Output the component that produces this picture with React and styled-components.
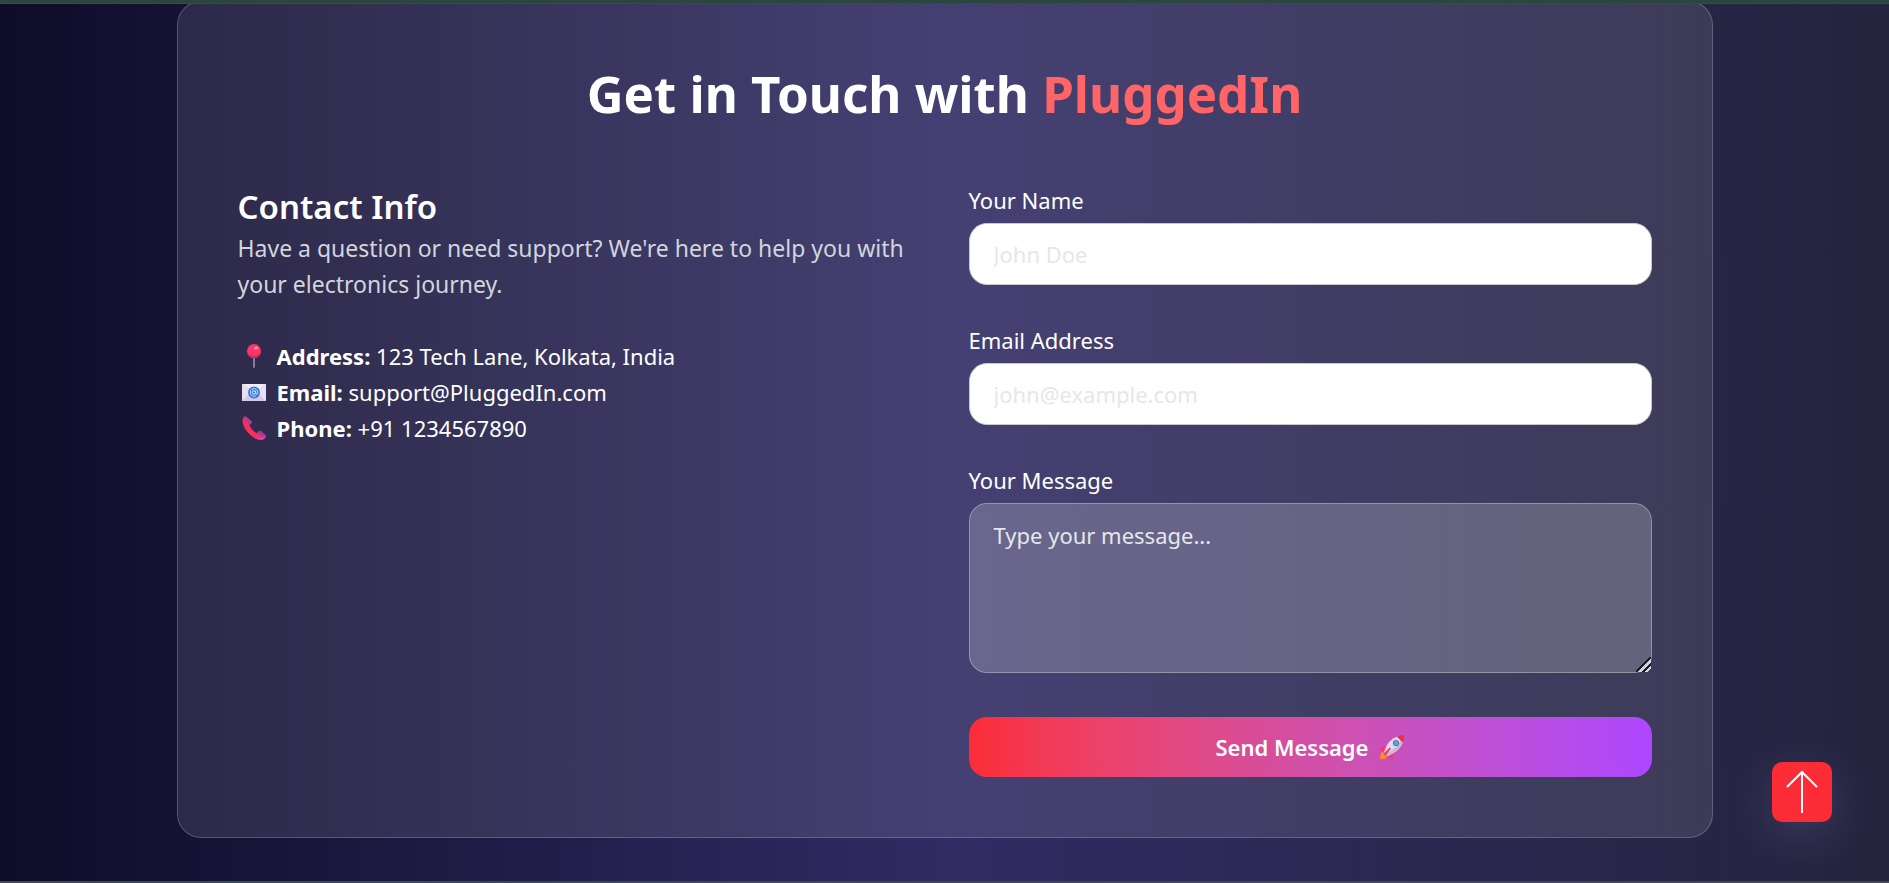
import React from 'react';
import styled, { createGlobalStyle } from 'styled-components';

const GlobalStyle = createGlobalStyle`
  *, *::before, *::after { box-sizing: border-box; }
  body { margin: 0; background: #0f0c29; }
  body, button, input, textarea { font-family: "Segoe UI", "Noto Sans", sans-serif; }
  h1, h2, p, ul { margin: 0; padding: 0; }
`;

const Page = styled.main`
  min-height: 100vh;
  display: flex;
  flex-direction: column;
  background: linear-gradient(to right, #0f0c29, #302b63, #24243e);
  color: #fff;
  font-size: 22px;
  line-height: 36px;
`;

const TopEdge = styled.div`
  height: 4px;
  background: #2a463d;
  border-bottom: 1px solid #3c4a40;
  position: relative;
`;

const BottomEdge = styled.div`
  height: 2px;
  margin-top: auto;
  background: linear-gradient(to right, #454745, #3a4a52 8%, #454650);
`;

const Card = styled.section`
  width: calc(100% - 48px);
  max-width: 1536px;
  margin: -3px auto 43px;
  padding: 60px;
  background: rgba(255, 255, 255, 0.1);
  border: 1px solid rgba(255, 255, 255, 0.2);
  border-radius: 24px;
`;

const Title = styled.h1`
  margin-bottom: 58px;
  font-size: 51px;
  line-height: 63px;
  font-weight: 700;
  text-align: center;
`;

const Brand = styled.span`
  color: #ff6467;
`;

const Columns = styled.div`
  display: grid;
  grid-template-columns: 1fr 1fr;
  gap: 48px;
  @media (max-width: 900px) { grid-template-columns: 1fr; }
`;

const InfoTitle = styled.h2`
  font-size: 33px;
  line-height: 47px;
  font-weight: 600;
`;

const Intro = styled.p`
  color: #d1d5dc;
  font-size: 23px;
`;

const Details = styled.ul`
  margin-top: 36px;
  list-style: none;
`;

const Detail = styled.li`
  display: flex;
  align-items: center;
  gap: 11px;
  padding-left: 4px;
  svg { flex: none; }
`;

const Form = styled.form`
  display: flex;
  flex-direction: column;
  gap: 38px;
`;

const Field = styled.div`
  display: flex;
  flex-direction: column;
  gap: 6px;
`;

const Label = styled.label`
  line-height: 34px;
`;

const TextInput = styled.input`
  width: 100%;
  height: 62px;
  padding: 12px 24px;
  font-size: 22px;
  line-height: 38px;
  color: #fff;
  background: #fff;
  border: 1px solid #c9c9cd;
  border-radius: 18px;
  outline: none;
  &::placeholder { color: #e5e7eb; opacity: 1; }
`;

const MessageInput = styled(TextInput)`
  height: 170px;
  background: rgba(255, 255, 255, 0.2);
  border-color: rgba(255, 255, 255, 0.3);
  resize: both;
  &::-webkit-resizer {
    background: linear-gradient(135deg, transparent 46%, #1d1b2b 46% 55%, #d5d4de 55% 68%, #1d1b2b 68% 78%, #d5d4de 78% 88%, transparent 88%);
  }
`;

const SendButton = styled.button`
  display: flex;
  align-items: center;
  justify-content: center;
  gap: 10px;
  height: 60px;
  margin-top: 6px;
  border: 0;
  border-radius: 18px;
  background: linear-gradient(to right in oklab, #fb2c36, #ad46ff);
  color: #fff;
  font-size: 22px;
  font-weight: 600;
  cursor: pointer;
`;

const ScrollTop = styled.button`
  position: fixed;
  right: 57px;
  bottom: 61px;
  display: grid;
  place-items: center;
  width: 60px;
  height: 60px;
  padding: 0;
  border: 0;
  border-radius: 10px;
  background: #fb2c36;
  box-shadow: 0 12px 48px rgba(190, 190, 255, 0.16);
  cursor: pointer;
`;

const PinIcon = () => (
  <svg width="24" height="24" viewBox="0 0 24 24" aria-hidden="true">
    <path d="M11.2 12h1.6v11.2q-.8 1-1.6 0z" fill="#9b93aa" />
    <circle cx="12" cy="7" r="7" fill="#f8376b" />
    <path d="M5.4 9.4A7 7 0 0 0 18.9 8 9 9 0 0 1 5.4 9.4z" fill="#d92a55" />
    <ellipse cx="14.2" cy="4" rx="2.1" ry="1.6" fill="#ff91ab" />
  </svg>
);

const MailIcon = () => (
  <svg width="24" height="24" viewBox="0 0 24 24" aria-hidden="true">
    <path d="M0 4h24v17H0z" fill="#e8e0f2" />
    <path d="M0 21 10 11h4l10 10z" fill="#d6c6ea" />
    <path d="m0 4 10 8h4l10-8" fill="#f1ecf7" stroke="#cbbedb" strokeWidth=".5" />
    <circle cx="12" cy="12.5" r="6" fill="#3b7dd8" />
    <circle cx="12" cy="12.5" r="1.7" fill="none" stroke="#d9e9ff" />
    <path d="M13.7 11v2.2q.1 1.3 1.2 1.1c1-.3 1-1.2.9-2.1A3.8 3.8 0 1 0 14 15.7" fill="none" stroke="#d9e9ff" strokeWidth=".8" />
  </svg>
);

const PhoneIcon = () => (
  <svg width="24" height="24" viewBox="0 0 24 24" aria-hidden="true">
    <path d="M2.5.5C-.5 2.200 0 8 3.500 13.500 8 20 14.500 24.500 20 23.800c1.500-.2 3.400-1.600 3.900-3.300L18 14.800l-3.300 2.400C11.500 15.500 8.800 12.500 7.300 9.100L9.200 6z" fill="#f2315f" />
    <path d="M12 21.500c3 1.800 5.600 2.500 8 2.300 1.500-.2 3.400-1.600 3.900-3.300l-2-2c-2 2.600-5.600 4-9.900 3z" fill="#e23a9e" />
    <path d="M2.500.5q1-.8 2 .2l5 4.600q.8.900 0 1.900L7.800 9 2 2z" fill="#b83a96" />
    <path d="m14.700 17.200 2-2.300q1.200-1 2.200 0l5 4.300q.4.600 0 1.300l-1.300 1.300z" fill="#a83a94" />
  </svg>
);

const RocketIcon = () => (
  <svg width="26" height="26" viewBox="0 0 26 26" aria-hidden="true">
    <path d="M3 17.500 8.500 22 6 24.700 1 25q-.6-4 2-7.500z" fill="#f79427" />
    <path d="M9 11.500 3.500 13q-2 1.500-2.500 4.500l6-.5zM15 17l-1 5.500q-1.500 1.800-4.500 2.500L9 19z" fill="#f8376b" />
    <path d="M5 18Q9 5 18.500 2.500L24 8q-3 9-15 14z" fill="#e3d9ec" />
    <path d="M9 22Q21 15.500 24 8l-2-2Q17 15 7 20z" fill="#c7b7d5" />
    <path d="M18 2.700Q22 .5 25 1q.7 4-1.400 7.500z" fill="#ef2e4c" />
    <path d="m4.500 20 6-6.500 1.500 1.300-5.500 7z" fill="#f8376b" />
    <circle cx="17" cy="9" r="3.100" fill="#6c6a9a" />
    <circle cx="17" cy="9" r="2.300" fill="#4aa5f2" />
  </svg>
);

const ArrowUp = () => (
  <svg width="34" height="44" viewBox="0 0 34 44" fill="none" stroke="#fff" strokeWidth="2" aria-hidden="true">
    <path d="M17 43V2M2 17 17 2l15 15" />
  </svg>
);

const details = [
  { Icon: PinIcon, label: 'Address:', value: '123 Tech Lane, Kolkata, India' },
  { Icon: MailIcon, label: 'Email:', value: 'support@PluggedIn.com' },
  { Icon: PhoneIcon, label: 'Phone:', value: '+91 1234567890' },
];

export default function App() {
  return (
    <Page>
      <GlobalStyle />
      <TopEdge />
      <Card>
        <Title>Get in Touch with <Brand>PluggedIn</Brand></Title>
        <Columns>
          <div>
            <InfoTitle>Contact Info</InfoTitle>
            <Intro>Have a question or need support? We're here to help you with your electronics journey.</Intro>
            <Details>
              {details.map(({ Icon, label, value }) => (
                <Detail key={label}>
                  <Icon />
                  <span><strong>{label}</strong> {value}</span>
                </Detail>
              ))}
            </Details>
          </div>
          <Form onSubmit={(e) => e.preventDefault()}>
            <Field>
              <Label htmlFor="name">Your Name</Label>
              <TextInput id="name" type="text" placeholder="John Doe" />
            </Field>
            <Field>
              <Label htmlFor="email">Email Address</Label>
              <TextInput id="email" type="email" placeholder="john@example.com" />
            </Field>
            <Field>
              <Label htmlFor="message">Your Message</Label>
              <MessageInput as="textarea" id="message" placeholder="Type your message..." />
            </Field>
            <SendButton type="submit">Send Message <RocketIcon /></SendButton>
          </Form>
        </Columns>
      </Card>
      <BottomEdge />
      <ScrollTop type="button" aria-label="Scroll to top"><ArrowUp /></ScrollTop>
    </Page>
  );
}
